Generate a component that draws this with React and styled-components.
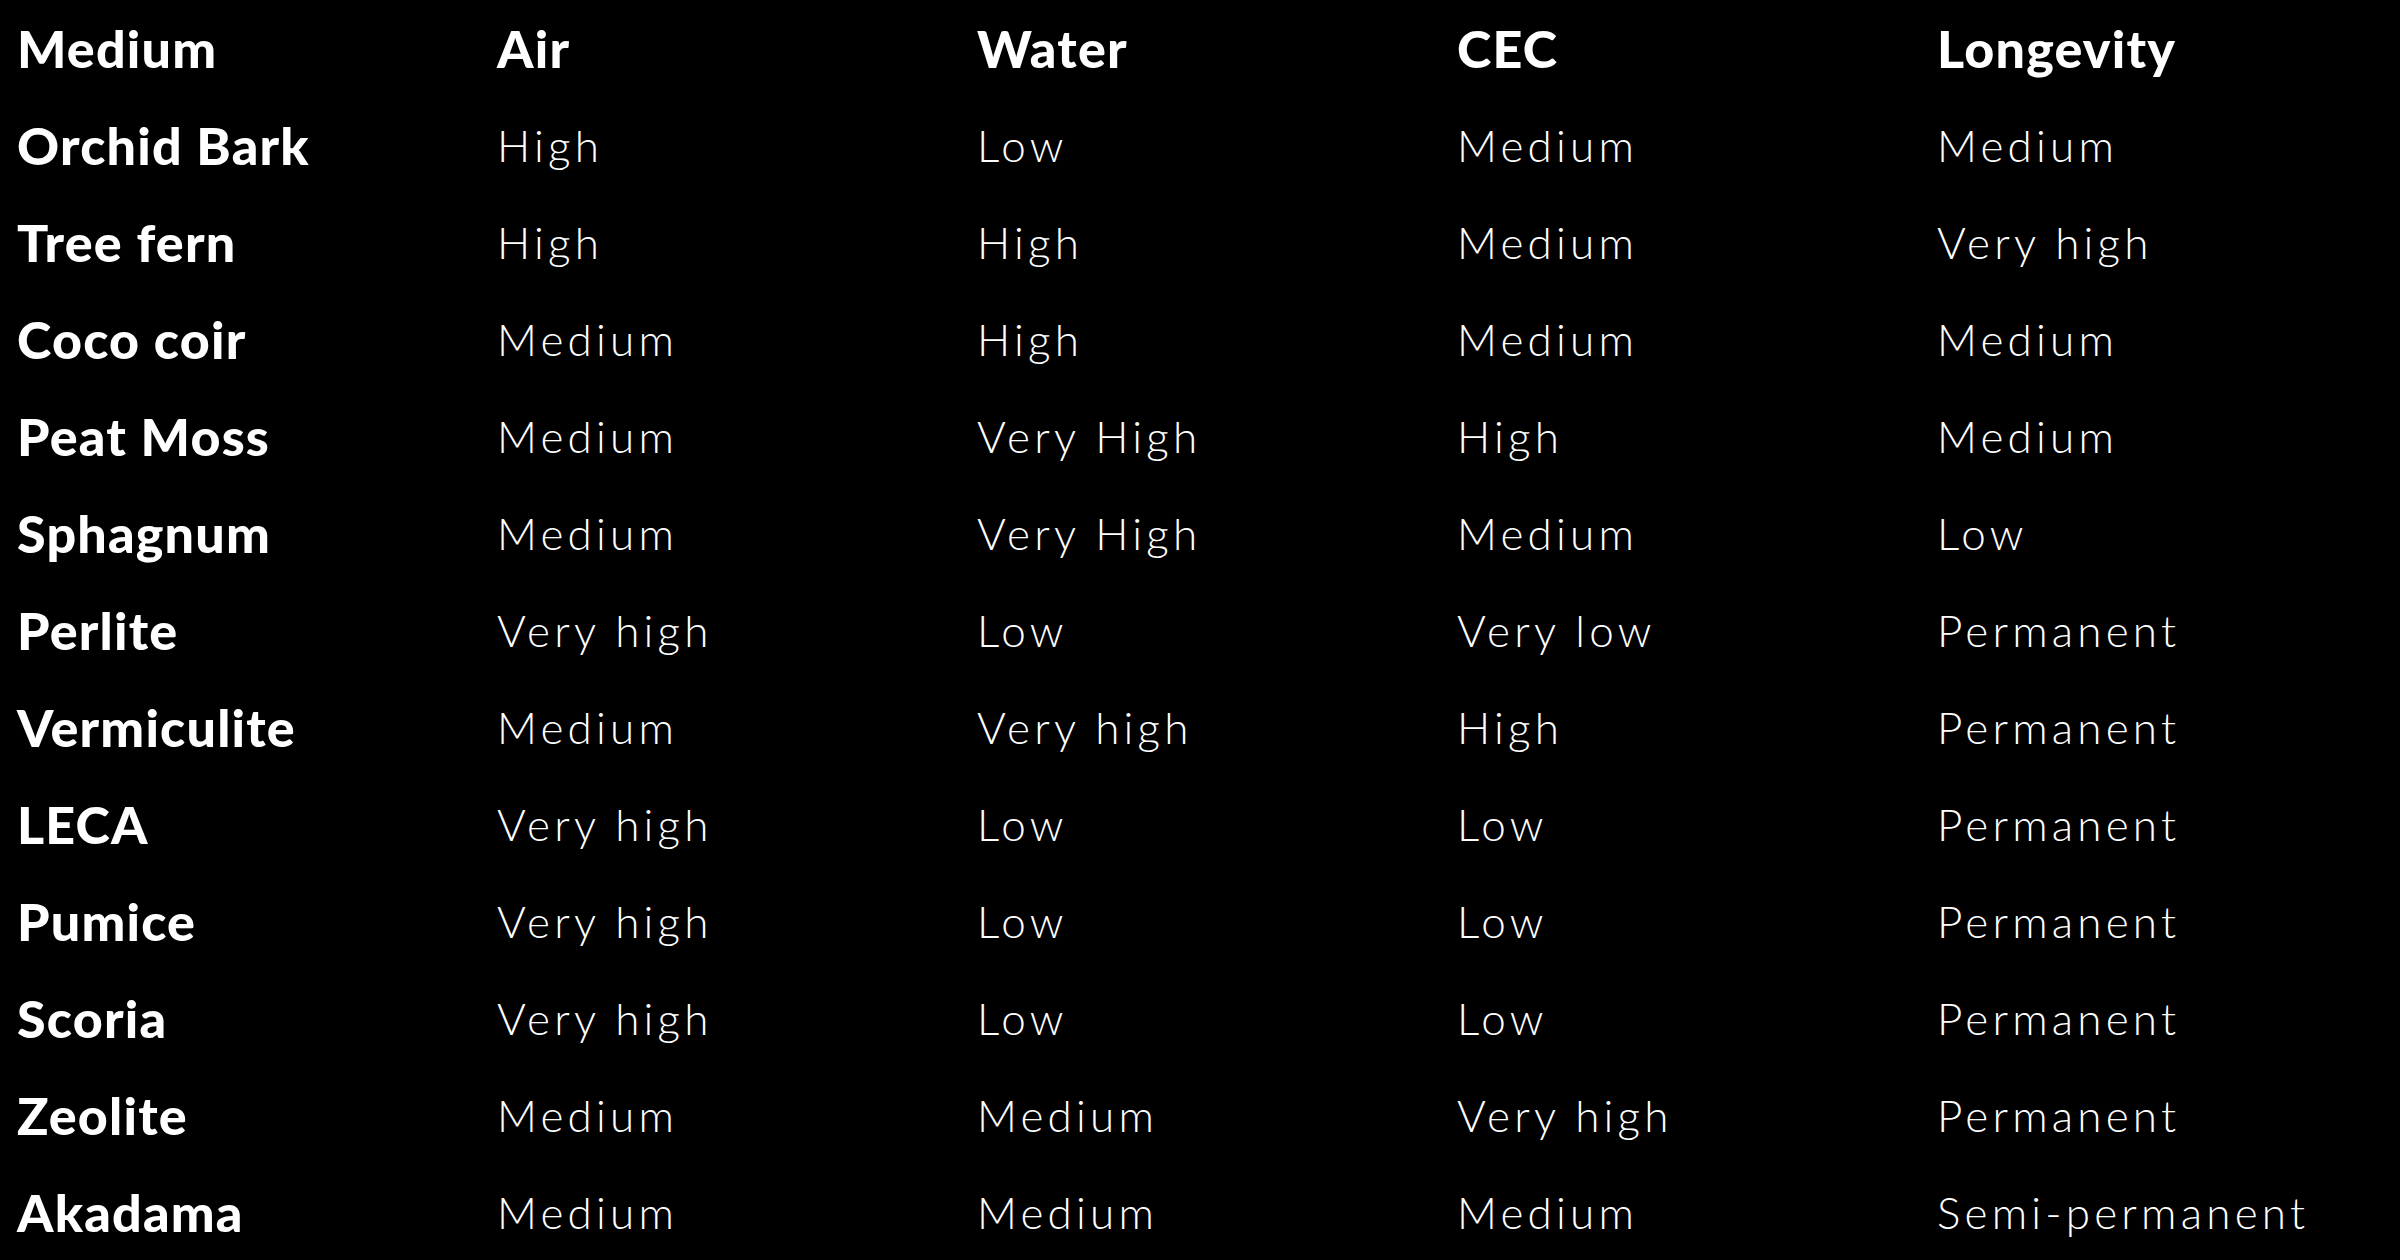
import React from 'react';
import styled, { createGlobalStyle } from 'styled-components';

const GlobalStyle = createGlobalStyle`
  html, body {
    margin: 0;
    padding: 0;
    background: #000;
  }
`;

const Table = styled.div`
  display: grid;
  grid-template-columns: repeat(5, 480px);
  grid-auto-rows: 97px;
  padding-left: 17px;
  background: #000;
  color: #fff;
  width: 2400px;
  height: 1260px;
  box-sizing: border-box;
  overflow: hidden;
`;

const Cell = styled.div`
  font-family: Lato, "Noto Sans", sans-serif;
  font-size: ${(p) => (p.$bold ? '52px' : '44px')};
  font-weight: ${(p) => (p.$bold ? 900 : 300)};
  line-height: 97px;
  letter-spacing: ${(p) => (p.$bold ? '1.2px' : '4.2px')};
  white-space: nowrap;
`;

const header = ['Medium', 'Air', 'Water', 'CEC', 'Longevity'];

const rows = [
  ['Orchid Bark', 'High', 'Low', 'Medium', 'Medium'],
  ['Tree fern', 'High', 'High', 'Medium', 'Very high'],
  ['Coco coir', 'Medium', 'High', 'Medium', 'Medium'],
  ['Peat Moss', 'Medium', 'Very High', 'High', 'Medium'],
  ['Sphagnum', 'Medium', 'Very High', 'Medium', 'Low'],
  ['Perlite', 'Very high', 'Low', 'Very low', 'Permanent'],
  ['Vermiculite', 'Medium', 'Very high', 'High', 'Permanent'],
  ['LECA', 'Very high', 'Low', 'Low', 'Permanent'],
  ['Pumice', 'Very high', 'Low', 'Low', 'Permanent'],
  ['Scoria', 'Very high', 'Low', 'Low', 'Permanent'],
  ['Zeolite', 'Medium', 'Medium', 'Very high', 'Permanent'],
  ['Akadama', 'Medium', 'Medium', 'Medium', 'Semi-permanent'],
];

const App = () => {
  return (
    <>
      <GlobalStyle />
      <Table>
        {header.map((h) => (
          <Cell key={h} $bold>{h}</Cell>
        ))}
        {rows.map((row) =>
          row.map((value, i) => (
            <Cell key={row[0] + i} $bold={i === 0}>{value}</Cell>
          ))
        )}
      </Table>
    </>
  );
};

export default App;
